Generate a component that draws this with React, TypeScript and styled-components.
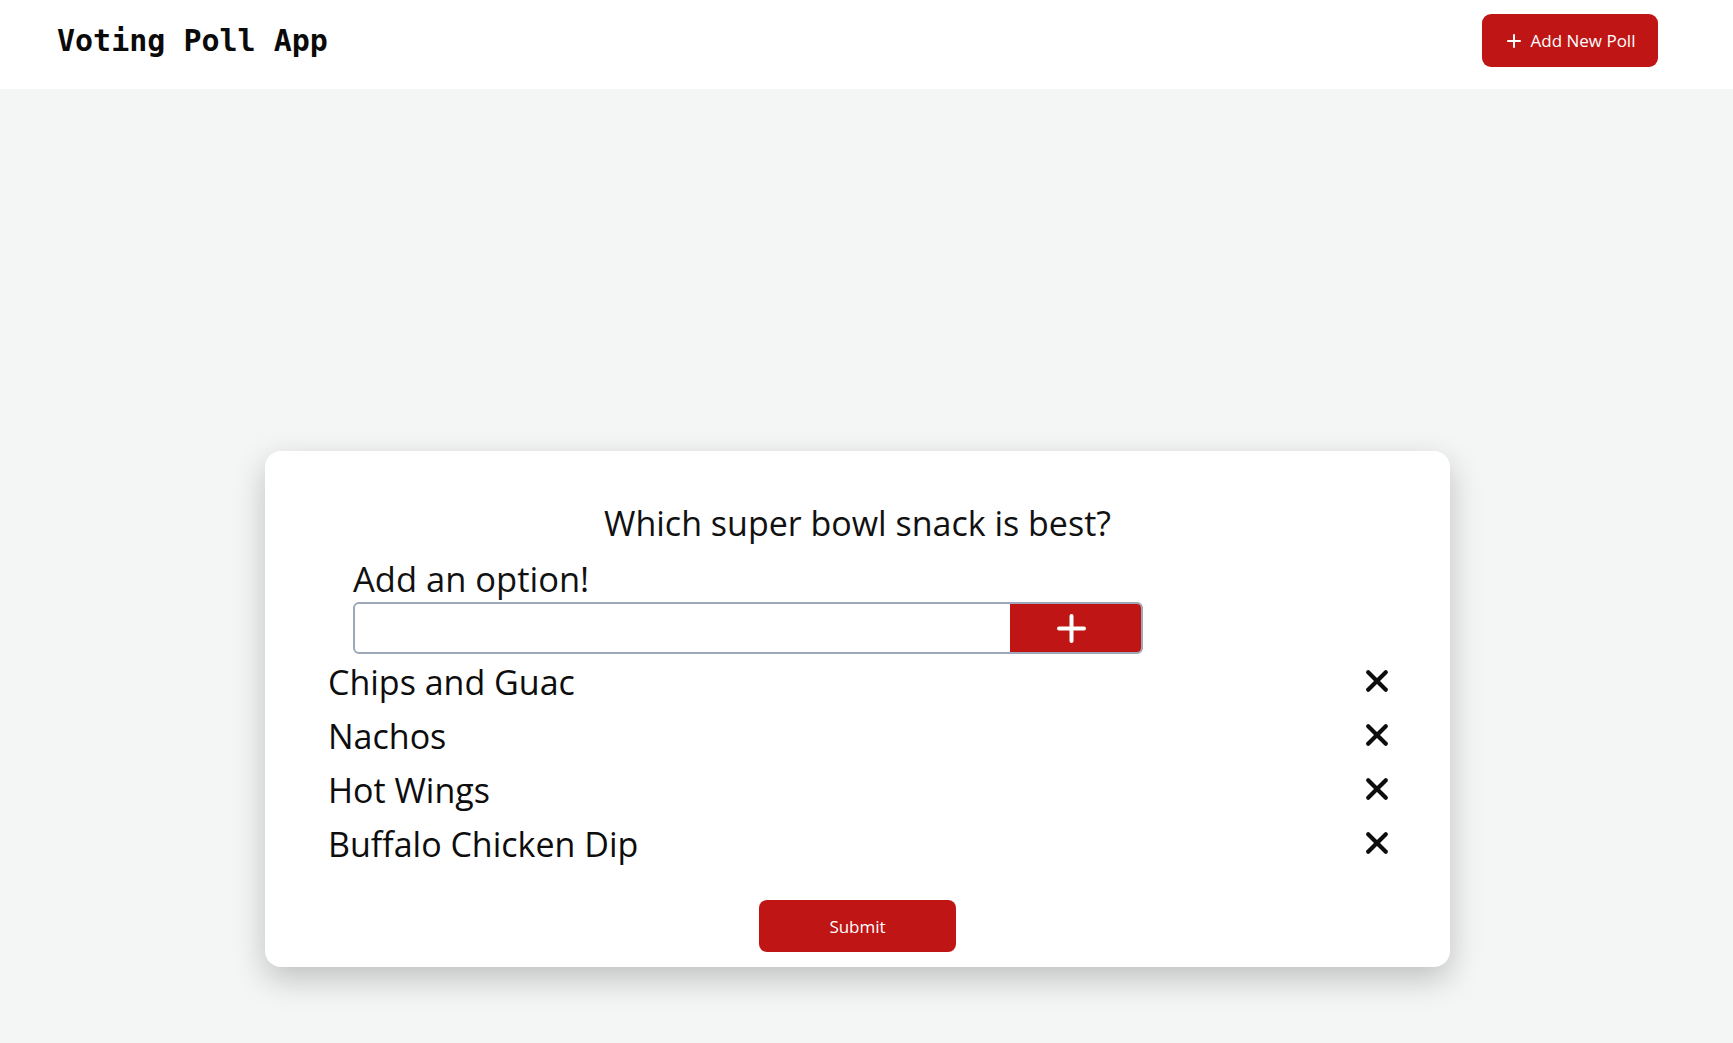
import React, { useState } from "react";
import styled, { createGlobalStyle } from "styled-components";

const GlobalStyle = createGlobalStyle`
  html, body {
    margin: 0;
    padding: 0;
    background: #f4f6f5;
  }
  body {
    font-family: "Segoe UI", "Open Sans", "Noto Sans", sans-serif;
    color: #111;
  }
  #root {
    min-height: 100vh;
  }
  * { box-sizing: border-box; }
`;

const RED = "#bf1515";

const Header = styled.header`
  height: 89px;
  background: #fff;
  display: flex;
  align-items: center;
  justify-content: space-between;
  padding: 0 75px 8px 57px;
`;

const Title = styled.h1`
  margin: 0;
  font-family: "DejaVu Sans Mono", "Liberation Mono", monospace;
  font-weight: bold;
  font-size: 30px;
  letter-spacing: 0;
  color: #0a0a0a;
`;

const HeaderButton = styled.button`
  height: 53px;
  width: 176px;
  display: flex;
  align-items: center;
  justify-content: center;
  gap: 10px;
  padding: 0 22px 0 24px;
  border: none;
  border-radius: 9px;
  background: ${RED};
  color: #fff;
  font-family: "Segoe UI", "Open Sans", sans-serif;
  font-size: 17px;
  cursor: pointer;
`;

const Main = styled.main`
  display: flex;
  justify-content: center;
  padding: 362px 18px 76px 0;
`;

const Card = styled.section`
  width: 1185px;
  background: #fff;
  border-radius: 16px;
  box-shadow: 0 12px 32px rgba(0, 0, 0, 0.22);
  padding: 49px 0 15px;
  display: flex;
  flex-direction: column;
`;

const Question = styled.h2`
  margin: 0;
  text-align: center;
  font-weight: 400;
  font-size: 34px;
  line-height: 47px;
  color: #111;
`;

const OptionForm = styled.form`
  margin-top: 8px;
  padding-left: 88px;
  display: flex;
  flex-direction: column;
`;

const Label = styled.label`
  font-size: 34.5px;
  line-height: 47px;
  color: #111;
`;

const InputGroup = styled.div`
  width: 790px;
  height: 52px;
  display: flex;
  border: 2px solid #9ea8b9;
  border-radius: 6px;
  overflow: hidden;
  background: #fff;
`;

const TextInput = styled.input`
  flex: 1;
  border: none;
  outline: none;
  padding: 0 12px;
  font-family: inherit;
  font-size: 20px;
  background: transparent;
`;

const AddButton = styled.button`
  width: 131px;
  border: none;
  background: ${RED};
  display: flex;
  align-items: center;
  justify-content: center;
  padding: 0 8px 0 0;
  cursor: pointer;
`;

const OptionList = styled.ul`
  list-style: none;
  margin: 0;
  padding: 0 61px 0 63px;
`;

const OptionRow = styled.li`
  height: 54px;
  display: flex;
  align-items: center;
  justify-content: space-between;
`;

const OptionText = styled.span`
  font-size: 34px;
  line-height: 47px;
  padding-top: 3px;
  color: #0d0d0d;
`;

const RemoveButton = styled.button`
  border: none;
  background: transparent;
  padding: 0;
  width: 24px;
  height: 24px;
  display: flex;
  align-items: center;
  justify-content: center;
  cursor: pointer;
`;

const SubmitButton = styled.button`
  align-self: center;
  margin-top: 30px;
  width: 197px;
  height: 52px;
  border: none;
  border-radius: 8px;
  background: ${RED};
  color: #fff;
  font-family: "Segoe UI", "Open Sans", sans-serif;
  font-size: 17px;
  cursor: pointer;
`;

const PlusIcon = ({ size, stroke }: { size: number; stroke: number }) => (
  <svg width={size} height={size} viewBox={`0 0 ${size} ${size}`} fill="none">
    <line x1={size / 2} y1={stroke / 2} x2={size / 2} y2={size - stroke / 2} stroke="#fff" strokeWidth={stroke} strokeLinecap="round" />
    <line x1={stroke / 2} y1={size / 2} x2={size - stroke / 2} y2={size / 2} stroke="#fff" strokeWidth={stroke} strokeLinecap="round" />
  </svg>
);

const CrossIcon = () => (
  <svg width="24" height="24" viewBox="0 0 24 24" fill="none">
    <line x1="3.2" y1="3.2" x2="20.8" y2="20.8" stroke="#0d0d0d" strokeWidth="4.2" strokeLinecap="round" />
    <line x1="20.8" y1="3.2" x2="3.2" y2="20.8" stroke="#0d0d0d" strokeWidth="4.2" strokeLinecap="round" />
  </svg>
);

export default function App() {
  const [options, setOptions] = useState<string[]>([
    "Chips and Guac",
    "Nachos",
    "Hot Wings",
    "Buffalo Chicken Dip",
  ]);
  const [value, setValue] = useState("");

  const add = (e: React.FormEvent) => {
    e.preventDefault();
    if (value.trim()) {
      setOptions([...options, value.trim()]);
      setValue("");
    }
  };

  return (
    <>
      <GlobalStyle />
      <Header>
        <Title>Voting Poll App</Title>
        <HeaderButton>
          <PlusIcon size={14} stroke={2} />
          Add New Poll
        </HeaderButton>
      </Header>
      <Main>
        <Card>
          <Question>Which super bowl snack is best?</Question>
          <OptionForm onSubmit={add}>
            <Label htmlFor="option">Add an option!</Label>
            <InputGroup>
              <TextInput id="option" value={value} onChange={(e) => setValue(e.target.value)} />
              <AddButton type="submit">
                <PlusIcon size={29} stroke={4} />
              </AddButton>
            </InputGroup>
          </OptionForm>
          <OptionList>
            {options.map((o, i) => (
              <OptionRow key={o + i}>
                <OptionText>{o}</OptionText>
                <RemoveButton onClick={() => setOptions(options.filter((_, j) => j !== i))}>
                  <CrossIcon />
                </RemoveButton>
              </OptionRow>
            ))}
          </OptionList>
          <SubmitButton>Submit</SubmitButton>
        </Card>
      </Main>
    </>
  );
}
